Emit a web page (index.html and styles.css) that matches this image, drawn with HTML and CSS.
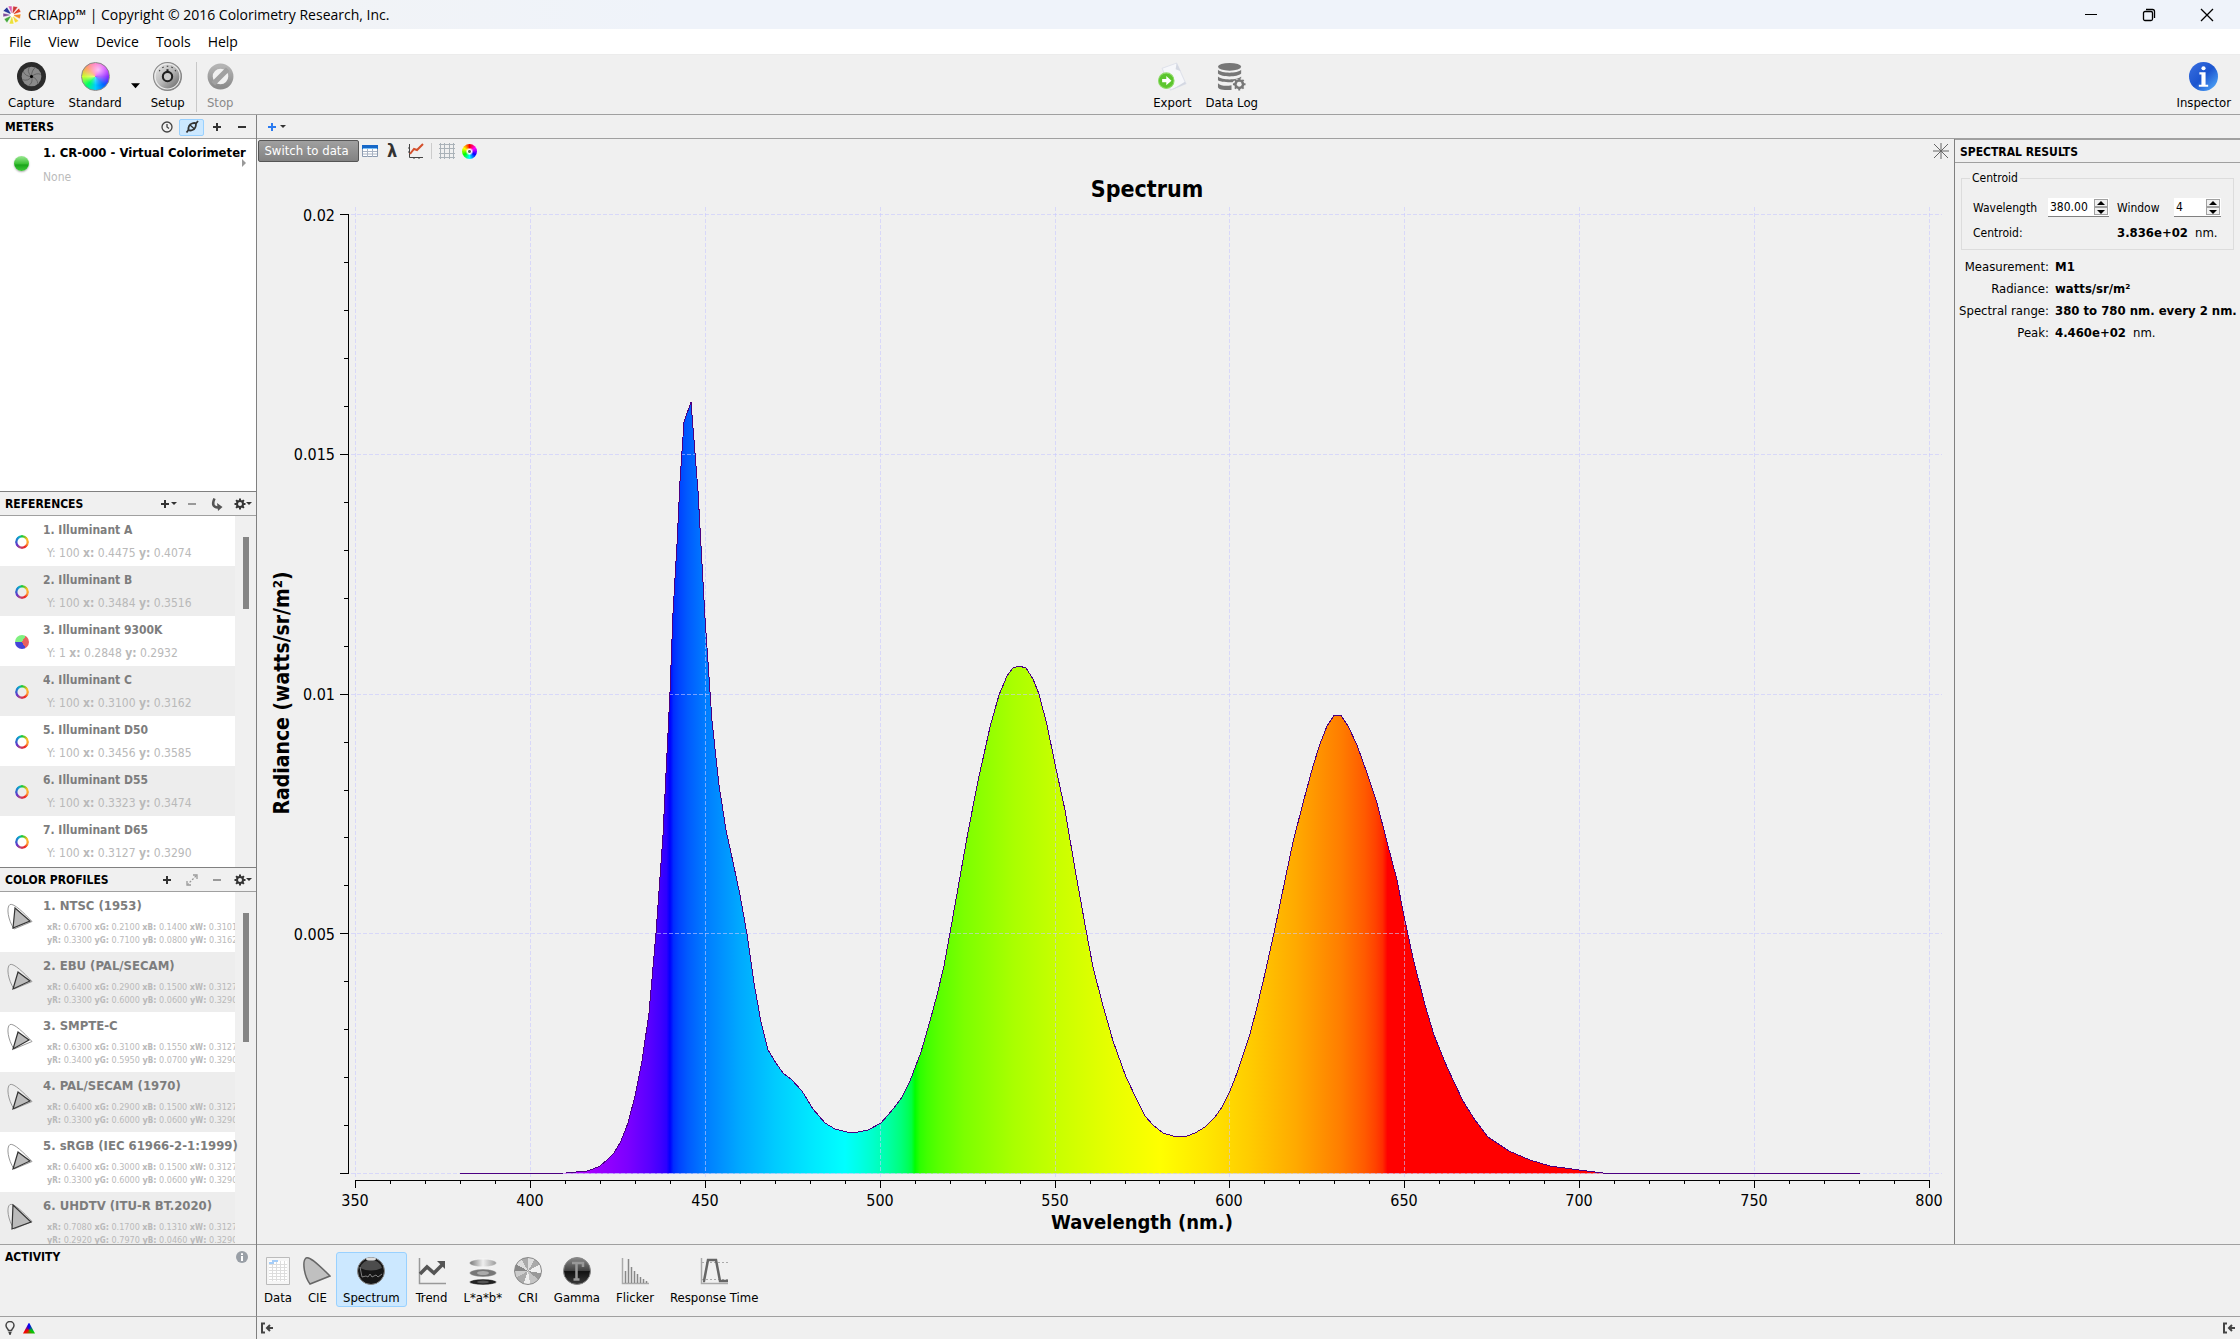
FILE: index.html
```html
<!DOCTYPE html>
<html lang="en">
<head>
<meta charset="utf-8">
<meta name="viewport" content="width=device-width, initial-scale=1">
<title>CRIApp™ | Copyright © 2016 Colorimetry Research, Inc.</title>
<link rel="stylesheet" href="styles.css">
</head>
<body>
<svg class="defs" aria-hidden="true">
  <defs>
    <linearGradient id="dark" x2="0" y2="1"><stop stop-color="#8a8a8a"/><stop offset=".48" stop-color="#444"/><stop offset=".52" stop-color="#111"/><stop offset="1" stop-color="#3a3a3a"/></linearGradient>
    <linearGradient id="metal" x2="1" y2="1"><stop stop-color="#eee"/><stop offset=".5" stop-color="#b8b8b8"/><stop offset="1" stop-color="#555"/></linearGradient>
    <linearGradient id="blue" x2="1" y2="1"><stop stop-color="#3a70e0"/><stop offset=".5" stop-color="#1c55cf"/><stop offset="1" stop-color="#58b4ff"/></linearGradient>
    <linearGradient id="stopgrey" x2="0" y2="1"><stop stop-color="#b4b4b4"/><stop offset="1" stop-color="#8c8c8c"/></linearGradient>
    <linearGradient id="disc" x2="1"><stop stop-color="#777"/><stop offset=".5" stop-color="#eee"/><stop offset="1" stop-color="#999"/></linearGradient>
  </defs>
  <symbol id="plus" viewBox="0 0 16 16"><path d="M8 4v8M4 8h8" stroke="currentColor" stroke-width="2"/></symbol>
  <symbol id="minus" viewBox="0 0 16 16"><path d="M4 8h8" stroke="currentColor" stroke-width="2"/></symbol>
  <symbol id="caret" viewBox="0 0 6 4"><path d="M0 0h6L3 3z" fill="currentColor"/></symbol>
  <symbol id="gear" viewBox="0 0 16 16"><circle cx="8" cy="8" r="3" fill="none" stroke="currentColor" stroke-width="2"/><path d="M8 2.500v2M8 11.500v2M2.500 8h2M11.500 8h2M4.100 4.100l1.400 1.400M10.500 10.500l1.400 1.400M4.100 11.900l1.400-1.400M10.500 5.500l1.400-1.400" stroke="currentColor" stroke-width="2"/></symbol>
  <symbol id="exit" viewBox="0 0 14 12"><path d="M5 1.500H2v9h3" fill="none" stroke="#444" stroke-width="2"/><path d="M13 6H7M10 3L7 6l3 3" fill="none" stroke="#444" stroke-width="2"/></symbol>
  <symbol id="locus" viewBox="0 0 26 28"><path d="M7 26C1 17-1 4 3 1.500 7 0 17 10 25 18.500z" fill="none" stroke="#999"/></symbol>
</svg>

<div class="app">
  <header class="titlebar">
    <svg class="logo" viewBox="0 0 20 20"><g stroke="#fff" stroke-width=".5"><path d="M10 10L6 1h4z" fill="#d95bb0"/><path d="M10 10l1-9 5 1z" fill="#cc3a3a"/><path d="M10 10l7-7 2 4z" fill="#e2442b"/><path d="M10 10l9-1-1 5z" fill="#f08a24"/><path d="M10 10l7 6-4 2z" fill="#f6d736"/><path d="M10 10l2 9-5 0z" fill="#e9e13b"/><path d="M10 10l-5 8-3-4z" fill="#46a83c"/><path d="M10 10l-9 2 0-4z" fill="#7c4a98"/><path d="M10 10L1 6l4-4z" fill="#2a3c9b"/></g><circle cx="10" cy="10" r="2" fill="#fff"/></svg>
    <span class="titlebar-text">CRIApp™ | Copyright © 2016 Colorimetry Research, Inc.</span>
    <button class="win" aria-label="Minimize"><svg viewBox="0 0 14 14"><path d="M1 6.500h12" stroke="#000"/></svg></button>
    <button class="win" aria-label="Restore"><svg viewBox="0 0 14 14" fill="none" stroke="#000" stroke-width="1.300"><rect x="1.500" y="3.500" width="9" height="9" rx="1.500"/><path d="M4 1.500h6.500a2 2 0 012 2V10"/></svg></button>
    <button class="win" aria-label="Close"><svg viewBox="0 0 14 14"><path d="M1 1l12 12M13 1L1 13" stroke="#000" stroke-width="1.300"/></svg></button>
  </header>

  <nav class="menubar">
    <button>File</button><button>View</button><button>Device</button><button>Tools</button><button>Help</button>
  </nav>

  <div class="toolbar">
    <div class="tools">
      <button class="tool">
        <svg class="tool-icon" viewBox="0 0 28 28"><circle cx="14" cy="14" r="14" fill="#2b2b2b"/><circle cx="14" cy="14" r="9.500" fill="#8a8a8a"/><g stroke="#555" stroke-width=".7" fill="none"><path d="M14 14Q14 8 18 5M14 14Q19 10 23 12M14 14q6 2 6 7M14 14q2 6-3 9M14 14q-3 5-9 3M14 14Q8 14 6 9M14 14Q9 9 12 5"/></g><circle cx="14" cy="14" r="1.500"/></svg>
        Capture</button>
      <button class="tool tool-standard"><i class="tool-icon wheel"></i>Standard</button>
      <button class="tool-arrow" aria-label="Standard options"><svg viewBox="0 0 10 6"><path d="M0 0h10L5 5.500z"/></svg></button>
      <button class="tool">
        <svg class="tool-icon" viewBox="0 0 28 28"><circle cx="14" cy="14" r="13.500" fill="url(#metal)" stroke="#888"/><circle cx="14" cy="14" r="12" fill="none" stroke="#eee"/><circle cx="14" cy="14" r="4.500" fill="#ccc" stroke="#222" stroke-width="2"/><path d="M14 7v3" stroke="#222" stroke-width="2"/><path d="M6 9a9 9 0 0116 0" fill="none" stroke="#333" stroke-dasharray="1.500 3"/></svg>
        Setup</button>
      <span class="tool-sep"></span>
      <button class="tool tool-stop" disabled>
        <svg class="tool-icon" viewBox="0 0 28 28"><circle cx="14" cy="14" r="10" fill="none" stroke="url(#stopgrey)" stroke-width="5"/><path d="M7 21L21 7" stroke="#a0a0a0" stroke-width="5"/></svg>
        Stop</button>
    </div>
    <div class="tools">
      <button class="tool">
        <svg class="tool-icon" viewBox="0 0 28 28"><path d="M4 6L18 1l9 20-15 6z" fill="#f6f7fa" stroke="#dfe2ea"/><path d="M18 1l-1 6 5 2z" fill="#d4d8e2"/><path d="M13 27l14-6-1-2z" fill="#d4d8e2"/><circle cx="8" cy="18" r="7.500" fill="#5cc52e" stroke="#8fdc6a"/><path d="M4 16.500h4v-3l5 4.500-5 4.500v-3H4z" fill="#fff"/></svg>
        Export</button>
      <button class="tool">
        <svg class="tool-icon" viewBox="0 0 30 28" fill="#777"><ellipse cx="13" cy="4" rx="12" ry="4"/><path d="M1 7c4 4 20 4 24 0v4c-4 4-20 4-24 0zM1 14c4 4 20 4 24 0v2c-6 0-8 3-9 4-6 0-12 0-15-2zM1 21c3 3 9 3 14 2v5C9 28 2 28 1 25z"/><circle cx="23" cy="22" r="4" fill="none" stroke="#777" stroke-width="2.500"/><path d="M23 15.500v13M16.500 22h13M18.500 17.500l9 9M27.500 17.500l-9 9" stroke="#777" stroke-width="2"/><circle cx="23" cy="22" r="2.500" fill="#f0f0f0"/></svg>
        Data Log</button>
    </div>
    <div class="tools">
      <button class="tool">
        <svg class="tool-icon" viewBox="0 0 28 28"><circle cx="14" cy="14" r="14" fill="url(#blue)"/><g fill="#fff"><circle cx="14" cy="6" r="2"/><path d="M10 10h6v12h2.500v2h-9v-2H12V12h-2z"/></g></svg>
        Inspector</button>
    </div>
  </div>

  <div class="workspace">
    <aside class="sidebar">
      <section class="panel">
        <div class="panel-head">
          <h2>METERS</h2>
          <button class="mini" aria-label="History"><svg viewBox="0 0 16 16" fill="none" stroke="#444" stroke-width="1.300"><circle cx="8" cy="8" r="5"/><path d="M8 5v3l2 1.500"/></svg></button>
          <button class="mini on" aria-label="Connect"><svg viewBox="0 0 16 16" fill="none" stroke="#333"><path d="M2.500 13.500l2-2.500M12 4.500l2-2.500" stroke-width="1.800"/><path d="M4.500 11Q4 6 8 4.500q2.500-1 4 0Q12 10 8.500 11q-2.500 1-4 0z" stroke-width="1.800"/><path d="M6 6l4.500 4" stroke-width="1.400"/></svg></button>
          <button class="mini" aria-label="Add meter"><svg><use href="#plus"/></svg></button>
          <button class="mini" aria-label="Remove meter"><svg><use href="#minus"/></svg></button>
        </div>
        <ul class="list">
          <li class="meter">
            <i class="led"></i>
            <div class="meter-text"><strong>1. CR-000 - Virtual Colorimeter</strong><span>None</span></div>
            <svg class="meter-more" viewBox="0 0 4 8"><path d="M0 0l4 4-4 4z" fill="#999"/></svg>
          </li>
        </ul>
      </section>

      <section class="panel">
        <div class="panel-head">
          <h2>REFERENCES</h2>
          <button class="mini" aria-label="Add reference"><svg><use href="#plus"/></svg><svg class="caret"><use href="#caret"/></svg></button>
          <button class="mini dim" aria-label="Remove reference"><svg><use href="#minus"/></svg></button>
          <button class="mini" aria-label="Apply"><svg viewBox="0 0 16 16"><path d="M5.500 2.500Q1.500 11 9 11.500" fill="none" stroke="#555" stroke-width="2.500"/><path d="M8 7l5.500 4L9 15z" fill="#555"/></svg></button>
          <button class="mini" aria-label="Reference options"><svg><use href="#gear"/></svg><svg class="caret"><use href="#caret"/></svg></button>
        </div>
        <div class="scroller">
          <ul class="list refs">
            <li><i class="ring"></i><div><strong>1. Illuminant A</strong><span>Y: 100 <b>x:</b> 0.4475 <b>y:</b> 0.4074</span></div></li>
            <li><i class="ring"></i><div><strong>2. Illuminant B</strong><span>Y: 100 <b>x:</b> 0.3484 <b>y:</b> 0.3516</span></div></li>
            <li><i class="ring pie"></i><div><strong>3. Illuminant 9300K</strong><span>Y: 1 <b>x:</b> 0.2848 <b>y:</b> 0.2932</span></div></li>
            <li><i class="ring"></i><div><strong>4. Illuminant C</strong><span>Y: 100 <b>x:</b> 0.3100 <b>y:</b> 0.3162</span></div></li>
            <li><i class="ring"></i><div><strong>5. Illuminant D50</strong><span>Y: 100 <b>x:</b> 0.3456 <b>y:</b> 0.3585</span></div></li>
            <li><i class="ring"></i><div><strong>6. Illuminant D55</strong><span>Y: 100 <b>x:</b> 0.3323 <b>y:</b> 0.3474</span></div></li>
            <li><i class="ring"></i><div><strong>7. Illuminant D65</strong><span>Y: 100 <b>x:</b> 0.3127 <b>y:</b> 0.3290</span></div></li>
          </ul>
          <div class="track"><i class="thumb thumb-refs"></i></div>
        </div>
      </section>

      <section class="panel">
        <div class="panel-head">
          <h2>COLOR PROFILES</h2>
          <button class="mini" aria-label="Add profile"><svg><use href="#plus"/></svg></button>
          <button class="mini dim" aria-label="Expand"><svg viewBox="0 0 16 16" fill="none" stroke="currentColor" stroke-width="1.300"><path d="M9 3h4v4M7 13H3V9"/><path d="M12 4L4 12" stroke-dasharray="2 1.500"/></svg></button>
          <button class="mini dim" aria-label="Remove profile"><svg><use href="#minus"/></svg></button>
          <button class="mini" aria-label="Profile options"><svg><use href="#gear"/></svg><svg class="caret"><use href="#caret"/></svg></button>
        </div>
        <div class="scroller">
          <ul class="list profiles">
            <li><svg class="gamut" viewBox="0 0 26 28"><use href="#locus"/><path d="M8 5l15 13L6 25z" fill="#bbb" stroke="#333" stroke-width="1.200"/></svg><div><strong>1. NTSC (1953)</strong><span><b>x<small>R</small>:</b> 0.6700 <b>x<small>G</small>:</b> 0.2100 <b>x<small>B</small>:</b> 0.1400 <b>x<small>W</small>:</b> 0.3101</span><span><b>y<small>R</small>:</b> 0.3300 <b>y<small>G</small>:</b> 0.7100 <b>y<small>B</small>:</b> 0.0800 <b>y<small>W</small>:</b> 0.3162</span></div></li>
            <li><svg class="gamut" viewBox="0 0 26 28"><use href="#locus"/><path d="M11 9l12 9L6 26z" fill="#bbb" stroke="#333" stroke-width="1.200"/></svg><div><strong>2. EBU (PAL/SECAM)</strong><span><b>x<small>R</small>:</b> 0.6400 <b>x<small>G</small>:</b> 0.2900 <b>x<small>B</small>:</b> 0.1500 <b>x<small>W</small>:</b> 0.3127</span><span><b>y<small>R</small>:</b> 0.3300 <b>y<small>G</small>:</b> 0.6000 <b>y<small>B</small>:</b> 0.0600 <b>y<small>W</small>:</b> 0.3290</span></div></li>
            <li><svg class="gamut" viewBox="0 0 26 28"><use href="#locus"/><path d="M11 9l11 8L6 26z" fill="#bbb" stroke="#333" stroke-width="1.200"/></svg><div><strong>3. SMPTE-C</strong><span><b>x<small>R</small>:</b> 0.6300 <b>x<small>G</small>:</b> 0.3100 <b>x<small>B</small>:</b> 0.1550 <b>x<small>W</small>:</b> 0.3127</span><span><b>y<small>R</small>:</b> 0.3400 <b>y<small>G</small>:</b> 0.5950 <b>y<small>B</small>:</b> 0.0700 <b>y<small>W</small>:</b> 0.3290</span></div></li>
            <li><svg class="gamut" viewBox="0 0 26 28"><use href="#locus"/><path d="M11 9l12 9L6 26z" fill="#bbb" stroke="#333" stroke-width="1.200"/></svg><div><strong>4. PAL/SECAM (1970)</strong><span><b>x<small>R</small>:</b> 0.6400 <b>x<small>G</small>:</b> 0.2900 <b>x<small>B</small>:</b> 0.1500 <b>x<small>W</small>:</b> 0.3127</span><span><b>y<small>R</small>:</b> 0.3300 <b>y<small>G</small>:</b> 0.6000 <b>y<small>B</small>:</b> 0.0600 <b>y<small>W</small>:</b> 0.3290</span></div></li>
            <li><svg class="gamut" viewBox="0 0 26 28"><use href="#locus"/><path d="M11 9l12 9L6 26z" fill="#bbb" stroke="#333" stroke-width="1.200"/></svg><div><strong>5. sRGB (IEC 61966-2-1:1999)</strong><span><b>x<small>R</small>:</b> 0.6400 <b>x<small>G</small>:</b> 0.3000 <b>x<small>B</small>:</b> 0.1500 <b>x<small>W</small>:</b> 0.3127</span><span><b>y<small>R</small>:</b> 0.3300 <b>y<small>G</small>:</b> 0.6000 <b>y<small>B</small>:</b> 0.0600 <b>y<small>W</small>:</b> 0.3290</span></div></li>
            <li><svg class="gamut" viewBox="0 0 26 28"><use href="#locus"/><path d="M6 2l18 17L5 26z" fill="#bbb" stroke="#333" stroke-width="1.200"/></svg><div><strong>6. UHDTV (ITU-R BT.2020)</strong><span><b>x<small>R</small>:</b> 0.7080 <b>x<small>G</small>:</b> 0.1700 <b>x<small>B</small>:</b> 0.1310 <b>x<small>W</small>:</b> 0.3127</span><span><b>y<small>R</small>:</b> 0.2920 <b>y<small>G</small>:</b> 0.7970 <b>y<small>B</small>:</b> 0.0460 <b>y<small>W</small>:</b> 0.3290</span></div></li>
          </ul>
          <div class="track"><i class="thumb thumb-profiles"></i></div>
        </div>
      </section>

      <section class="activity">
        <h2>ACTIVITY</h2>
        <svg class="info" viewBox="0 0 12 12"><circle cx="6" cy="6" r="6" fill="#999fa6"/><path d="M5 5h2v5H5zM5 2.200h2v1.800H5z" fill="#fff"/></svg>
      </section>
    </aside>

    <div class="tabstrip">
      <button class="newtab" aria-label="New view"><svg><use href="#plus"/></svg><svg class="caret"><use href="#caret"/></svg></button>
    </div>

    <main class="chart-pane">
      <div class="chart-tools">
        <button class="switch">Switch to data</button>
        <button class="ct" aria-label="Table"><svg viewBox="0 0 16 16"><path d="M.5 2.500h15v11H.5z" fill="#fff" stroke="#8c9bb0"/><path d="M0 2h16v4H0z" fill="#1668c8"/><path d="M1 5.500h14" stroke="#7cc0f5"/><path d="M1 8.500h14M1 11h14M5.500 6v8M10.500 6v8" stroke="#aab4c4"/></svg></button>
        <button class="ct lambda" aria-label="Wavelength">λ</button>
        <button class="ct" aria-label="Plot"><svg viewBox="0 0 16 16" fill="none"><path d="M1.500 1v13.500H15M0 5h2M0 9h2M6 14v2M11 14v2" stroke="#444"/><path d="M2 11l4-5 3 1 6-6" stroke="#d4502c" stroke-width="2"/></svg></button>
        <span class="ct-sep"></span>
        <button class="ct" aria-label="Grid"><svg viewBox="0 0 16 16"><path d="M1.500 0v16M5.500 0v16M10.500 0v16M14.500 0v16M0 1.500h16M0 5.500h16M0 10.500h16M0 14.500h16" stroke="#aab2b8"/></svg></button>
        <button class="ct" aria-label="Colors"><i class="eye"></i></button>
        <button class="ct star" aria-label="Markers"><svg viewBox="0 0 16 16"><path d="M8 0v16M0 8h16M1 1l14 14M15 1L1 15" stroke="#666"/></svg></button>
      </div>
      <svg class="chart" viewBox="257 163 1697 1081" role="img" aria-label="Spectrum">
        <defs>
          <linearGradient id="spectrum" gradientUnits="userSpaceOnUse" x1="460" y1="0" x2="1860" y2="0">
            <stop offset="0" stop-color="#f0f"/><stop offset=".06" stop-color="rgb(203,0,255)"/><stop offset=".09" stop-color="rgb(169,0,255)"/><stop offset=".12" stop-color="rgb(124,0,255)"/><stop offset=".135" stop-color="rgb(90,0,255)"/><stop offset=".1425" stop-color="rgb(66,0,255)"/><stop offset=".1475" stop-color="rgb(44,0,255)"/><stop offset=".15" stop-color="#00f"/>
            <stop offset=".1525" stop-color="rgb(0,44,255)"/><stop offset=".1563" stop-color="rgb(0,66,255)"/><stop offset=".1625" stop-color="rgb(0,90,255)"/><stop offset=".175" stop-color="rgb(0,124,255)"/><stop offset=".2" stop-color="rgb(0,169,255)"/><stop offset=".225" stop-color="rgb(0,203,255)"/><stop offset=".25" stop-color="rgb(0,231,255)"/><stop offset=".275" stop-color="#0ff"/>
            <stop offset=".285" stop-color="rgb(0,255,231)"/><stop offset=".295" stop-color="rgb(0,255,203)"/><stop offset=".305" stop-color="rgb(0,255,169)"/><stop offset=".315" stop-color="rgb(0,255,124)"/><stop offset=".32" stop-color="rgb(0,255,90)"/><stop offset=".3225" stop-color="rgb(0,255,66)"/><stop offset=".325" stop-color="#0f0"/>
            <stop offset=".3285" stop-color="rgb(44,255,0)"/><stop offset=".3338" stop-color="rgb(66,255,0)"/><stop offset=".3425" stop-color="rgb(90,255,0)"/><stop offset=".36" stop-color="rgb(124,255,0)"/><stop offset=".395" stop-color="rgb(169,255,0)"/><stop offset=".43" stop-color="rgb(203,255,0)"/><stop offset=".465" stop-color="rgb(231,255,0)"/><stop offset=".5" stop-color="#ff0"/>
            <stop offset=".5325" stop-color="rgb(255,231,0)"/><stop offset=".565" stop-color="rgb(255,203,0)"/><stop offset=".5975" stop-color="rgb(255,169,0)"/><stop offset=".63" stop-color="rgb(255,124,0)"/><stop offset=".6463" stop-color="rgb(255,90,0)"/><stop offset=".654" stop-color="rgb(255,66,0)"/><stop offset=".659" stop-color="rgb(255,44,0)"/><stop offset=".6625" stop-color="red"/>
          </linearGradient>
          <path id="curve" d="M460 1173.500L566 1173 587 1171 593 1169 600 1166 607 1160 614 1153 621 1141 628 1123 635 1096 642 1061 649 1013 656 933 663 835 670 692 673 613 677 544 680 481 684 422 691 402 698 491 705 618 712 721 719 785 726 830 733 862 740 895 747 934 754 983 761 1022 768 1050 776 1063 783 1073 792 1080 802 1091 813 1109 825 1123 835 1129 847 1132 858 1132 868 1130 881 1123 894 1108 902 1097 910 1081 921 1052 930 1021 937 995 944 966 950 933 958 888 968 832 978 781 990 727 999 695 1007 676 1013 668 1019 666 1026 668 1033 679 1039 694 1047 725 1055 764 1065 810 1075 869 1086 930 1093 967 1102 1002 1113 1041 1126 1077 1137 1100 1145 1116 1153 1125 1163 1133 1173 1136 1181 1137 1187 1136 1195 1133 1205 1127 1215 1117 1222 1107 1230 1091 1237 1073 1250 1034 1257 1007 1263 982 1274 933 1285 880 1293 842 1303 803 1313 766 1320 744 1327 726 1334 715.500 1341 715.500 1348 726 1357 745 1367 773 1377 803 1387 842 1397 880 1404 916 1413 958 1425 1005 1434 1035 1447 1067 1463 1101 1475 1120 1488 1137 1509 1151 1530 1160 1550 1166 1579 1170 1607 1173.500 1860 1173.500"/>
        </defs>
        <use class="area" href="#curve"/>
        <path class="grid" d="M355.500 207V1178M530.500 207V1178M705.500 207V1178M880.500 207V1178M1055.500 207V1178M1229.500 207V1178M1404.500 207V1178M1579.500 207V1178M1754.500 207V1178M1929.500 207V1178M351 214.500H1942M351 454.500H1942M351 694.500H1942M351 933.500H1942M351 1173.500H1942"/>
        <use class="curve" href="#curve"/>
        <path class="axis" d="M348.500 214V1174M340 214.500h8M340 454.500h8M340 694.500h8M340 933.500h8M340 1173.500h8M344 262.500h4M344 310.500h4M344 358.500h4M344 406.500h4M344 502.500h4M344 550.500h4M344 598.500h4M344 646.500h4M344 742.500h4M344 790.500h4M344 837.500h4M344 885.500h4M344 981.500h4M344 1029.500h4M344 1077.500h4M344 1125.500h4"/>
        <path class="axis" d="M355 1180.500H1930M355.500 1180v8M530.500 1180v8M705.500 1180v8M880.500 1180v8M1055.500 1180v8M1229.500 1180v8M1404.500 1180v8M1579.500 1180v8M1754.500 1180v8M1929.500 1180v8M390.500 1180v4M425.500 1180v4M460.500 1180v4M495.500 1180v4M565.500 1180v4M600.500 1180v4M635.500 1180v4M670.500 1180v4M740.500 1180v4M775.500 1180v4M810.500 1180v4M845.500 1180v4M915.500 1180v4M950.500 1180v4M985.500 1180v4M1020.500 1180v4M1090.500 1180v4M1125.500 1180v4M1159.500 1180v4M1194.500 1180v4M1264.500 1180v4M1299.500 1180v4M1334.500 1180v4M1369.500 1180v4M1439.500 1180v4M1474.500 1180v4M1509.500 1180v4M1544.500 1180v4M1614.500 1180v4M1649.500 1180v4M1684.500 1180v4M1719.500 1180v4M1789.500 1180v4M1824.500 1180v4M1859.500 1180v4M1894.500 1180v4"/>
        <g class="ticks ticks-y"><text x="335" y="221">0.02</text><text x="335" y="460">0.015</text><text x="335" y="700">0.01</text><text x="335" y="940">0.005</text></g>
        <g class="ticks ticks-x"><text x="355" y="1206">350</text><text x="530" y="1206">400</text><text x="705" y="1206">450</text><text x="880" y="1206">500</text><text x="1055" y="1206">550</text><text x="1229" y="1206">600</text><text x="1404" y="1206">650</text><text x="1579" y="1206">700</text><text x="1754" y="1206">750</text><text x="1929" y="1206">800</text></g>
        <text class="chart-title" x="1147" y="197">Spectrum</text>
        <text class="axis-title" x="1142" y="1229">Wavelength (nm.)</text>
        <text class="axis-title axis-title-y" transform="translate(289 693) rotate(-90)">Radiance (watts/sr/m²)</text>
      </svg>
    </main>

    <aside class="inspector">
      <h2>SPECTRAL RESULTS</h2>
      <fieldset>
        <legend>Centroid</legend>
        <label for="wl">Wavelength</label>
        <span class="spin"><input id="wl" type="text" value="380.00"><span class="spin-btns"><button aria-label="Wavelength up"><svg viewBox="0 0 8 5"><path d="M4 0l4 4H0z"/></svg></button><button aria-label="Wavelength down"><svg viewBox="0 0 8 5"><path d="M0 1h8L4 5z"/></svg></button></span></span>
        <label for="win">Window</label>
        <span class="spin spin-narrow"><input id="win" type="text" value="4"><span class="spin-btns"><button aria-label="Window up"><svg viewBox="0 0 8 5"><path d="M4 0l4 4H0z"/></svg></button><button aria-label="Window down"><svg viewBox="0 0 8 5"><path d="M0 1h8L4 5z"/></svg></button></span></span>
        <span class="centroid-label">Centroid:</span>
        <span class="centroid-value"><b>3.836e+02</b><span>nm.</span></span>
      </fieldset>
      <dl>
        <dt>Measurement:</dt><dd><b>M1</b></dd>
        <dt>Radiance:</dt><dd><b>watts/sr/m²</b></dd>
        <dt>Spectral range:</dt><dd><b>380 to 780 nm. every 2 nm.</b></dd>
        <dt>Peak:</dt><dd><b>4.460e+02</b><span>nm.</span></dd>
      </dl>
    </aside>

    <nav class="views">
      <button class="view"><svg viewBox="0 0 28 28"><path d="M2.500.500h23v27h-23z" fill="#f6f6f6" stroke="#bbb"/><path d="M5 4h18v20H5z" fill="#fff"/><path d="M5 7.500h18M5 10.500h18M5 13.500h18M5 16.500h18M5 19.500h18M5 22.500h18M8.500 4v20M12.500 4v20M16.500 4v20M20.500 4v20" stroke="#ddd"/><path d="M5 6h4V4h5" fill="none" stroke="#a5cdf8" stroke-width="2"/></svg>Data</button>
      <button class="view"><svg viewBox="0 0 28 28"><path d="M7 27C1 19-1 4 3 1 7-1 17 9 27 19z" fill="#c0c0c0" stroke="#666" stroke-width="1.500"/></svg>CIE</button>
      <button class="view selected"><svg viewBox="0 0 28 28"><circle cx="14" cy="14" r="13.500" fill="#161616" stroke="#888"/><path d="M3 11a11.500 11.500 0 0122 0q-11 5-22 0z" fill="#4c4c4c"/><path d="M3 10l2 10 4-1 2 1 2-3 2 3 4-2 2 2 4-3" fill="none" stroke="#999" stroke-width=".8"/><ellipse cx="14" cy="2" rx="5" ry="1.500" fill="#ddd"/></svg>Spectrum</button>
      <button class="view"><svg viewBox="0 0 28 28" fill="none"><path d="M1.500 1v25.500H28" stroke="#999" stroke-width="1.500"/><path d="M2 17l7-7 7 6 8-8" stroke="#555" stroke-width="3.500"/><path d="M19 4h8v8z" fill="#555"/></svg>Trend</button>
      <button class="view"><svg viewBox="0 0 28 28"><g stroke="#fff" stroke-width=".5"><ellipse cx="14" cy="6" rx="13.500" ry="4" fill="url(#disc)"/><ellipse cx="14" cy="16" rx="13.500" ry="4" fill="#777"/><ellipse cx="14" cy="25" rx="13.500" ry="3" fill="#222"/></g><ellipse cx="14" cy="16" rx="6" ry="2" fill="#aaa"/><ellipse cx="14" cy="25" rx="6" ry="1.500" fill="#555"/></svg>L*a*b*</button>
      <button class="view"><i class="cri"></i>CRI</button>
      <button class="view"><svg viewBox="0 0 28 28"><circle cx="14" cy="14" r="13.500" fill="url(#dark)" stroke="#888"/><path d="M9 6h11v4M13.500 6v16M10.500 22.500h6" fill="none" stroke="#999" stroke-width="2.500"/></svg>Gamma</button>
      <button class="view"><svg viewBox="0 0 28 28" fill="none" stroke="#888"><path d="M1.500 1v25.500H28" stroke="#aaa" stroke-width="1.500"/><path d="M4.500 14v12M7.500 2v24M10.500 10v16M13.500 14v12M16.500 17v9M19.500 20v6M22.500 22v4M25.500 24v2" stroke-width="1.500"/></svg>Flicker</button>
      <button class="view"><svg viewBox="0 0 28 28" fill="none"><path d="M1.500 1v25.500H28" stroke="#aaa" stroke-width="1.500"/><path d="M2 5.500h26M2 22.500h26" stroke="#aaa" stroke-dasharray="2 2"/><path d="M3 24h1L8 3h8l4 21h8" stroke="#666" stroke-width="2.500"/></svg>Response Time</button>
    </nav>

    <footer class="status status-left">
      <svg class="bulb" viewBox="0 0 10 14" fill="none" stroke="#444" stroke-width="1.500"><path d="M3.500 9.500C3.500 8 1 7 1 4.500a4 4 0 018 0C9 7 6.500 8 6.500 9.500z"/><path d="M3.500 11.500h3M4 13h2"/></svg>
      <i class="tri"></i>
    </footer>
    <footer class="status status-right">
      <svg class="exit"><use href="#exit"/></svg>
      <svg class="exit"><use href="#exit"/></svg>
    </footer>
  </div>
</div>
</body>
</html>
```
FILE: styles.css
```css
* { box-sizing: border-box; margin: 0; padding: 0; }

:root {
  --line: #a0a0a0;
  --dark-line: #808080;
  --face: #f0f0f0;
}

body {
  background: var(--face);
  color: #000;
  font: 13px/16px "DejaVu Sans Condensed", "DejaVu Sans", sans-serif;
  overflow: hidden;
}

button { background: none; border: 0; color: inherit; font: inherit; }
ul { list-style: none; }
svg, i { display: block; flex: none; }
h2 { font-size: 12px; font-weight: bold; line-height: 16px; }
.defs { position: absolute; width: 0; height: 0; }

.app { display: flex; flex-direction: column; height: 100vh; }

/* Title bar and menu */
.titlebar {
  display: flex; align-items: center; height: 29px; padding: 0 4px 0 2px;
  background: linear-gradient(90deg, #f3f3f3, #eff3fa 30%);
  font: 14px/20px "Open Sans", "Noto Sans", sans-serif;
}
.logo { width: 20px; height: 20px; }
.titlebar-text { flex: 1; margin-left: 6px; }
.win { width: 58px; height: 28px; display: grid; place-items: center; }
.win svg { width: 14px; height: 14px; }

.menubar {
  display: flex; gap: 1px; height: 26px; padding-left: 1px; background: #fff;
  border-bottom: 1px solid #ececec;
  font: 14px/26px "Open Sans", "Noto Sans", sans-serif;
}
.menubar button { padding: 0 8px; }

/* Main toolbar */
.toolbar {
  display: flex; justify-content: space-between; height: 60px; padding: 7px 2px 0 1px;
  border-bottom: 1px solid var(--line);
}
.tools { display: flex; align-items: flex-start; }
.tool {
  display: flex; flex-direction: column; align-items: center; gap: 4px;
  padding: 0 7px; white-space: nowrap;
}
.tool:disabled { color: #8a8a8a; }
.tool-icon { width: 29px; height: 29px; }
.tool-arrow { width: 18px; padding: 21px 0 0 5px; }
.tool-arrow svg { width: 9px; height: 6px; }
.tool-standard { padding-right: 4px; }
.tool-stop { padding-left: 5px; }
.tool-sep { width: 1px; height: 50px; margin: 0 4px; background: #c8c8c8; }
.wheel {
  border: 1px solid #888; border-radius: 50%;
  background: radial-gradient(circle at 60% 25%, #fffb, #fff0 60%), conic-gradient(from 90deg, #70f, #06f, #0cf, #0f6, #cf3, #f84, #f3a, #c0f, #70f);
}

/* Workspace grid */
.workspace {
  flex: 1; min-height: 0; display: grid;
  grid-template-columns: 257px 1fr 286px;
  grid-template-rows: 24px 1fr 72px 23px;
}
.sidebar {
  grid-row: 1 / 4; display: flex; flex-direction: column; min-height: 0;
  border-right: 1px solid var(--dark-line);
}
.panel { flex: 1; min-height: 0; display: flex; flex-direction: column; }
.panel + .panel { border-top: 1px solid var(--dark-line); }
.panel-head {
  display: flex; align-items: center; flex: none; height: 24px; padding: 1px 2px 0 5px;
  border-bottom: 1px solid var(--line);
}
.panel-head h2 { flex: 1; }
.mini {
  display: flex; align-items: center; justify-content: center; width: 25px; height: 17px;
  border: 1px solid transparent; border-radius: 2px; color: #333;
}
.mini svg { width: 16px; height: 16px; }
.mini.on { background: #cce8ff; border-color: #99d1ff; }
.mini.dim { color: #999; }
.mini .caret, .newtab .caret { width: 6px; height: 4px; margin-left: -2px; }

.list { flex: 1; min-width: 0; background: #fff; }
.list li { display: flex; white-space: nowrap; }
.list li > div { min-width: 0; }
.list strong { display: block; }
.list span { display: block; overflow: hidden; font-size: 12px; }

.meter { height: 50px; padding: 6px 10px 0 14px; }
.led {
  width: 15px; height: 15px; margin: 11px 14px 0 0; border-radius: 50%;
  background: linear-gradient(#9be893, #3fc238 50%, #1aa51a 60%, #3fc93a);
  box-shadow: 0 1px 2px #0005;
}
.meter-text { flex: 1; }
.meter-text span { margin-top: 8px; color: #bbb; }
.meter-more { width: 4px; height: 8px; margin-top: 14px; }

.scroller { flex: 1; min-height: 0; display: flex; overflow: hidden; }
.scroller .list li:nth-child(even) { background: #ededed; }
.scroller strong { color: #7d7d7d; }
.scroller .list span { padding-left: 4px; color: #b9b9b9; }
.track { width: 21px; padding: 21px 0 0 8px; }
.thumb { width: 6px; background: #858585; }
.thumb-refs { height: 72px; }
.thumb-profiles { height: 129px; }

.refs li { height: 50px; padding: 6px 0 0 15px; }
.refs strong { margin-bottom: 7px; font-size: 12px; }
.ring {
  width: 14px; height: 14px; margin: 13px 14px 0 0; border-radius: 50%;
  background: conic-gradient(#1c3, #fb2 60deg, #f93 110deg, #e22 150deg, #b2477f 200deg, #63c 240deg, #27c 290deg, #1ac 330deg, #1c3);
  mask: radial-gradient(circle, #0000 4px, #000 5px);
}
.ring.pie { background: conic-gradient(from 30deg, #e86060 120deg, #4444d8 120deg 240deg, #80f080 240deg); mask: none; }

.profiles li { height: 60px; padding: 6px 0 0 7px; }
.profiles strong { margin-bottom: 7px; }
.gamut { width: 26px; height: 28px; margin: 5px 10px 0 0; }
.list.profiles span { font-size: 9px; line-height: 12px; }
.profiles small { font-size: 8px; }

.activity {
  display: flex; justify-content: space-between; flex: none; height: 72px; padding: 4px 8px 0 5px;
  border-top: 1px solid var(--line);
}
.info { width: 12px; height: 12px; margin-top: 2px; }

.tabstrip { grid-column: 2 / 4; border-bottom: 1px solid var(--line); padding: 4px 7px; }
.newtab { display: flex; align-items: center; color: #2b7bf0; }
.newtab svg { width: 16px; height: 16px; }
.newtab .caret { color: #333; margin-left: 0; }

/* Chart */
.chart-pane { display: flex; flex-direction: column; min-width: 0; min-height: 0; }
.chart-tools { display: flex; align-items: center; flex: none; height: 24px; padding: 0 5px 0 1px; }
.switch {
  width: 101px; height: 22px; margin-right: 3px; padding-right: 4px; border: 1px solid #555; border-radius: 2px;
  background: linear-gradient(#a0a0a0, #828282); color: #fff;
}
.ct { width: 16px; height: 16px; margin-right: 7px; }
.ct svg { width: 16px; height: 16px; }
.lambda { margin: 0 7px 0 -2px; width: 18px; color: #333; font: bold 18px/16px "DejaVu Sans Condensed", sans-serif; }
.ct-sep { width: 1px; height: 16px; margin-right: 7px; background: #ccc; }
.eye {
  width: 15px; height: 15px; border-radius: 50%;
  background: radial-gradient(circle, #666 1px, #fff 2px, #0000 4px), conic-gradient(red, #f0f, #00f, #0ff, #0f0, #ff0, red);
}
.star { margin: 0 0 0 auto; }
.chart { flex: 1; width: 100%; min-height: 0; }
.area { fill: url(#spectrum); }
.curve { fill: none; stroke: #4b0082; stroke-width: 1; shape-rendering: crispEdges; }
.grid { fill: none; stroke: #c8c8ff; stroke-opacity: .6; stroke-dasharray: 4 2; }
.axis { fill: none; stroke: #000; }
.ticks { font-size: 16px; }
.ticks-y { text-anchor: end; }
.ticks-x, .axis-title, .chart-title { text-anchor: middle; }
.axis-title { font-size: 20px; font-weight: bold; }
.axis-title-y { font-size: 21px; }
.chart-title { font-size: 23px; font-weight: bold; }

/* Inspector */
.inspector { border-left: 1px solid var(--dark-line); }
.inspector h2 { height: 24px; padding: 4px 5px 0; border-top: 1px solid var(--line); border-bottom: 1px solid var(--line); }
fieldset {
  display: grid; grid-template-columns: 75px 69px 57px 1fr; align-items: center; row-gap: 8px;
  margin: 7px 6px 0; padding: 12px 11px 8px; border: 1px solid #dcdcdc;
  font-size: 12px; white-space: nowrap;
}
legend { margin-left: -3px; padding: 0 2px; line-height: 16px; }
.spin { display: flex; width: 61px; height: 19px; border-bottom: 1px solid var(--dark-line); background: #fff; }
.spin-narrow { width: 47px; }
.spin input { flex: 1; width: 100%; min-width: 0; border: 0; padding-left: 2px; background: none; font: inherit; }
.spin-btns { display: flex; flex: none; flex-direction: column; width: 15px; padding: 1px 1px 1px 0; }
.spin-btns button { flex: 1; display: grid; place-items: center; border: 1px solid var(--line); background: var(--face); }
.spin-btns svg { width: 8px; height: 5px; }
.centroid-label { grid-column: 1 / 3; }
.centroid-value { grid-column: 3 / 5; font-size: 13px; }
.centroid-value span, dd span { margin-left: 7px; }
dl { display: grid; grid-template-columns: 94px 1fr; column-gap: 6px; margin-top: 6px; line-height: 22px; white-space: nowrap; }
dt { text-align: right; }

/* View switcher and status bars */
.views {
  grid-column: 2 / 4; display: flex; align-items: flex-start; gap: 2px; padding-top: 7px;
  border-top: 1px solid var(--line);
}
.view {
  display: flex; flex-direction: column; align-items: center; gap: 5px; height: 55px;
  padding: 4px 6px 0; border: 1px solid transparent; border-radius: 3px; white-space: nowrap;
}
.view svg, .cri { width: 28px; height: 28px; margin: 0 -6px; }
.view.selected { background: #cce8ff; border-color: #99d1ff; }
.cri {
  border: 1px solid #888; border-radius: 50%;
  background: conic-gradient(#ddd 30deg, #aaa 30deg 60deg, #f0f0f0 60deg 100deg, #999 100deg 130deg, #c4c4c4 130deg 170deg, #eee 170deg 200deg, #aaa 200deg 240deg, #ccc 240deg 270deg, #888 270deg 300deg, #ddd 300deg 330deg, #aaa 330deg);
}
.status { display: flex; align-items: center; border-top: 1px solid var(--line); }
.status-left { gap: 8px; padding-left: 5px; border-right: 1px solid var(--dark-line); }
.status-right { grid-column: 2 / 4; justify-content: space-between; padding: 0 4px 0 3px; }
.bulb { width: 10px; height: 14px; }
.tri {
  width: 12px; height: 11px; clip-path: polygon(50% 0, 100% 100%, 0 100%);
  background: conic-gradient(from 0deg at 50% 60%, #00f, #0c0 120deg, #f00 240deg, #00f);
}
.exit { width: 14px; height: 12px; }
```
